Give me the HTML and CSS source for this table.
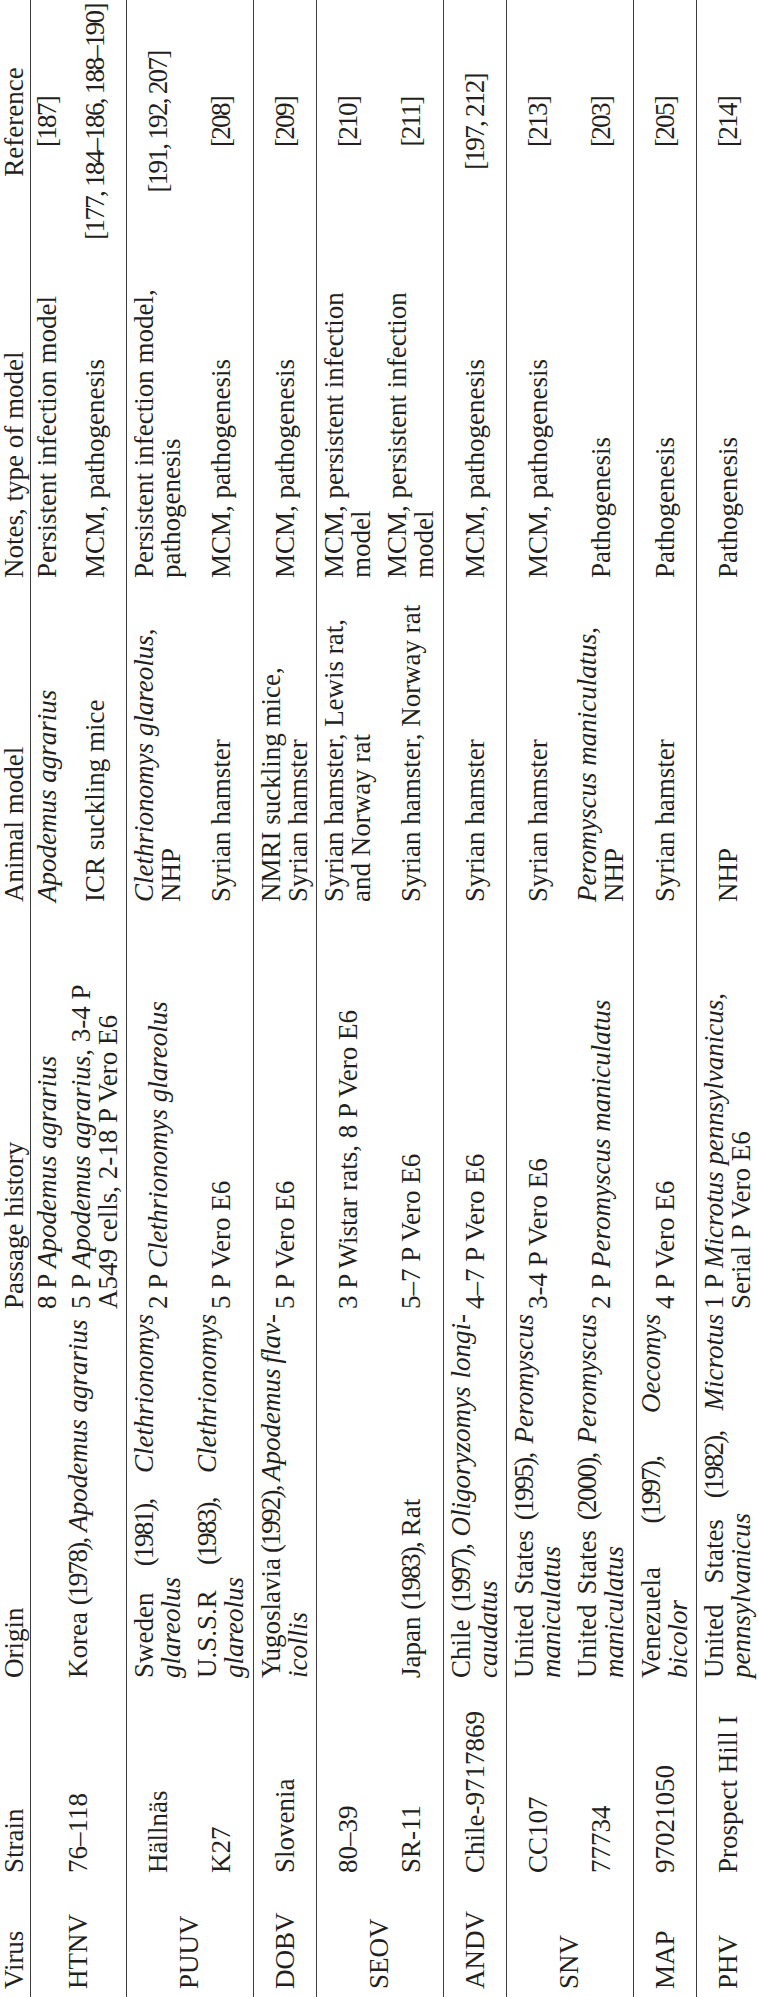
FILE: index.html
```html
<!DOCTYPE html>
<html lang="en">
<head>
<meta charset="utf-8">
<title>Hantavirus animal models table</title>
<link rel="stylesheet" href="styles.css">
</head>
<body>
<div class="page">
  <div class="rot">
    <table class="tbl">
      <colgroup>
        <col class="k1"><col class="k2"><col class="k3"><col class="k4"><col class="k5"><col class="k6"><col class="k7">
      </colgroup>
      <thead>
        <tr>
          <th class="c1">Virus</th>
          <th class="c2">Strain</th>
          <th class="c3">Origin</th>
          <th class="c4">Passage history</th>
          <th class="c5">Animal model</th>
          <th class="c6">Notes, type of model</th>
          <th class="c7"><div class="ref">Reference</div></th>
        </tr>
      </thead>
      <tbody class="htnv">
        <tr class="ra">
          <td class="c1" rowspan="2">HTNV</td>
          <td class="c2" rowspan="2">76–118</td>
          <td class="c3" rowspan="2">Korea <span class="d">(1978),</span> <i>Apodemus agrarius</i></td>
          <td class="c4">8 P <i>Apodemus agrarius</i></td>
          <td class="c5"><i>Apodemus agrarius</i></td>
          <td class="c6">Persistent infection model</td>
          <td class="c7"><div class="ref num">[187]</div></td>
        </tr>
        <tr>
          <td class="c4"><span class="ln">5 P <i>Apodemus agrarius</i>, 3-4 P</span><span class="ln">A549 cells, 2-18 P Vero E6</span></td>
          <td class="c5">ICR suckling mice</td>
          <td class="c6">MCM, pathogenesis</td>
          <td class="c7"><div class="ref num">[177, 184–186, 188–190]</div></td>
        </tr>
      </tbody>
      <tbody class="g2">
        <tr>
          <td class="c1" rowspan="2">PUUV</td>
          <td class="c2">Hällnäs</td>
          <td class="c3"><span class="ln j">Sweden <span class="d">(1981),</span> <i>Clethrionomys</i></span><span class="ln"><i>glareolus</i></span></td>
          <td class="c4">2 P <i>Clethrionomys glareolus</i></td>
          <td class="c5"><span class="ln"><i>Clethrionomys glareolus</i>,</span><span class="ln">NHP</span></td>
          <td class="c6"><span class="ln">Persistent infection model,</span><span class="ln">pathogenesis</span></td>
          <td class="c7"><div class="ref num">[191, 192, 207]</div></td>
        </tr>
        <tr>
          <td class="c2">K27</td>
          <td class="c3"><span class="ln j">U.S.S.R <span class="d">(1983),</span> <i>Clethrionomys</i></span><span class="ln"><i>glareolus</i></span></td>
          <td class="c4">5 P Vero E6</td>
          <td class="c5">Syrian hamster</td>
          <td class="c6">MCM, pathogenesis</td>
          <td class="c7"><div class="ref num">[208]</div></td>
        </tr>
      </tbody>
      <tbody>
        <tr>
          <td class="c1">DOBV</td>
          <td class="c2">Slovenia</td>
          <td class="c3"><span class="ln j sq">Yugoslavia <span class="d">(1992),</span> <i>Apodemus flav-</i></span><span class="ln"><i>icollis</i></span></td>
          <td class="c4">5 P Vero E6</td>
          <td class="c5"><span class="ln">NMRI suckling mice,</span><span class="ln">Syrian hamster</span></td>
          <td class="c6">MCM, pathogenesis</td>
          <td class="c7"><div class="ref num">[209]</div></td>
        </tr>
      </tbody>
      <tbody class="g2">
        <tr>
          <td class="c1" rowspan="2">SEOV</td>
          <td class="c2">80–39</td>
          <td class="c3"></td>
          <td class="c4">3 P Wistar rats, 8 P Vero E6</td>
          <td class="c5"><span class="ln">Syrian hamster, Lewis rat,</span><span class="ln">and Norway rat</span></td>
          <td class="c6"><span class="ln">MCM, persistent infection</span><span class="ln">model</span></td>
          <td class="c7"><div class="ref num">[210]</div></td>
        </tr>
        <tr>
          <td class="c2">SR-11</td>
          <td class="c3">Japan <span class="d">(1983),</span> Rat</td>
          <td class="c4">5–7 P Vero E6</td>
          <td class="c5">Syrian hamster, Norway rat</td>
          <td class="c6"><span class="ln">MCM, persistent infection</span><span class="ln">model</span></td>
          <td class="c7"><div class="ref num">[211]</div></td>
        </tr>
      </tbody>
      <tbody>
        <tr>
          <td class="c1">ANDV</td>
          <td class="c2">Chile-9717869</td>
          <td class="c3"><span class="ln j">Chile <span class="d">(1997),</span> <i>Oligoryzomys longi-</i></span><span class="ln"><i>caudatus</i></span></td>
          <td class="c4">4–7 P Vero E6</td>
          <td class="c5">Syrian hamster</td>
          <td class="c6">MCM, pathogenesis</td>
          <td class="c7"><div class="ref num">[197, 212]</div></td>
        </tr>
      </tbody>
      <tbody class="g2">
        <tr>
          <td class="c1" rowspan="2">SNV</td>
          <td class="c2">CC107</td>
          <td class="c3"><span class="ln j">United States <span class="d">(1995),</span> <i>Peromyscus</i></span><span class="ln"><i>maniculatus</i></span></td>
          <td class="c4">3-4 P Vero E6</td>
          <td class="c5">Syrian hamster</td>
          <td class="c6">MCM, pathogenesis</td>
          <td class="c7"><div class="ref num">[213]</div></td>
        </tr>
        <tr>
          <td class="c2">77734</td>
          <td class="c3"><span class="ln j">United States <span class="d">(2000),</span> <i>Peromyscus</i></span><span class="ln"><i>maniculatus</i></span></td>
          <td class="c4">2 P <i>Peromyscus maniculatus</i></td>
          <td class="c5"><span class="ln"><i>Peromyscus maniculatus</i>,</span><span class="ln">NHP</span></td>
          <td class="c6">Pathogenesis</td>
          <td class="c7"><div class="ref num">[203]</div></td>
        </tr>
      </tbody>
      <tbody>
        <tr>
          <td class="c1">MAP</td>
          <td class="c2">97021050</td>
          <td class="c3"><span class="ln j">Venezuela <span class="d">(1997),</span> <i>Oecomys</i></span><span class="ln"><i>bicolor</i></span></td>
          <td class="c4">4 P Vero E6</td>
          <td class="c5">Syrian hamster</td>
          <td class="c6">Pathogenesis</td>
          <td class="c7"><div class="ref num">[205]</div></td>
        </tr>
      </tbody>
      <tbody>
        <tr>
          <td class="c1">PHV</td>
          <td class="c2">Prospect Hill I</td>
          <td class="c3"><span class="ln j">United States <span class="d">(1982),</span> <i>Microtus</i></span><span class="ln"><i>pennsylvanicus</i></span></td>
          <td class="c4"><span class="ln">1 P <i>Microtus pennsylvanicus</i>,</span><span class="ln">Serial P Vero E6</span></td>
          <td class="c5">NHP</td>
          <td class="c6">Pathogenesis</td>
          <td class="c7"><div class="ref num">[214]</div></td>
        </tr>
      </tbody>
    </table>
  </div>
</div>
</body>
</html>
```

FILE: styles.css
```css
html, body {
  margin: 0;
  padding: 0;
  background: #ffffff;
}

body {
  width: 759px;
  height: 1997px;
  overflow: hidden;
}

.page {
  width: 759px;
  height: 1997px;
  overflow: hidden;
}

.rot {
  width: 1997px;
  transform-origin: 0 0;
  transform: translateY(1997px) rotate(-90deg);
}

.tbl {
  width: 1997px;
  table-layout: fixed;
  border-collapse: separate;
  border-spacing: 0;
  font-family: "Liberation Serif", "Times New Roman", serif;
  font-size: 27px;
  line-height: 27px;
  color: #231f20;
}

.k1 { width: 116px; }
.k2 { width: 199px; }
.k3 { width: 368px; }
.k4 { width: 407px; }
.k5 { width: 324px; }
.k6 { width: 331px; }
.k7 { width: 252px; }

.tbl th,
.tbl td {
  padding-top: 4px;
  padding-bottom: 4px;
  padding-right: 0;
  vertical-align: middle;
  text-align: left;
  font-weight: normal;
  white-space: nowrap;
}

.tbl thead th {
  padding-top: 1px;
  padding-bottom: 2px;
}

.tbl tbody tr:first-child td {
  border-top: 1px solid #3c3c3c;
}

.tbl tbody.g2 td {
  padding-bottom: 5px;
}

.tbl tbody.htnv tr.ra td {
  padding-top: 3px;
  padding-bottom: 3px;
}

.c1 { padding-left: 8px; }
.c2 { padding-left: 8px; }
.c3 { padding-left: 4px; }
.c4 { padding-left: 5px; }
.c5 { padding-left: 5px; }
.c6 { padding-left: 5px; }
.c7 { padding-left: 8px; }

.ln {
  display: block;
}

.j {
  white-space: normal;
  text-align: justify;
  text-align-last: justify;
}

.sq {
  word-spacing: -4px;
}

.d {
  letter-spacing: -1.7px;
}

.ref {
  display: flex;
  justify-content: center;
}

.num {
  letter-spacing: -1.7px;
}
```
